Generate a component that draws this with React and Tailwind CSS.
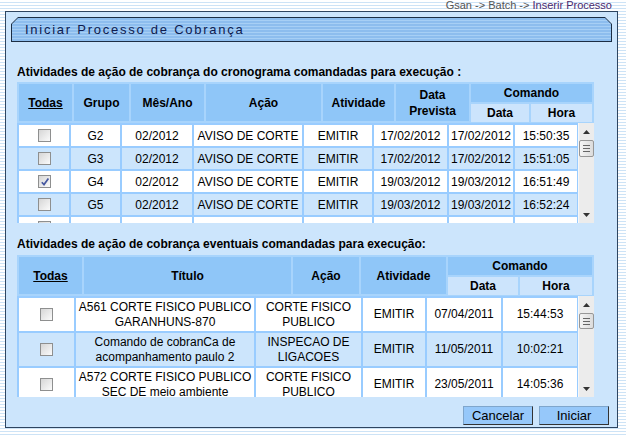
import React from "react";

// cronograma table rows
const cronograma = [
  { grupo: "G2", mes: "02/2012", acao: "AVISO DE CORTE", atv: "EMITIR", prev: "17/02/2012", data: "17/02/2012", hora: "15:50:35", checked: false },
  { grupo: "G3", mes: "02/2012", acao: "AVISO DE CORTE", atv: "EMITIR", prev: "17/02/2012", data: "17/02/2012", hora: "15:51:05", checked: false },
  { grupo: "G4", mes: "02/2012", acao: "AVISO DE CORTE", atv: "EMITIR", prev: "19/03/2012", data: "19/03/2012", hora: "16:51:49", checked: true },
  { grupo: "G5", mes: "02/2012", acao: "AVISO DE CORTE", atv: "EMITIR", prev: "19/03/2012", data: "19/03/2012", hora: "16:52:24", checked: false },
  { grupo: "", mes: "", acao: "", atv: "", prev: "", data: "", hora: "", checked: false },
];

const eventuais = [
  { titulo: "A561 CORTE FISICO PUBLICO GARANHUNS-870", acao: "CORTE FISICO PUBLICO", atv: "EMITIR", data: "07/04/2011", hora: "15:44:53" },
  { titulo: "Comando de cobranCa de acompanhamento paulo 2", acao: "INSPECAO DE LIGACOES", atv: "EMITIR", data: "11/05/2011", hora: "10:02:21" },
  { titulo: "A572 CORTE FISICO PUBLICO SEC DE meio ambiente", acao: "CORTE FISICO PUBLICO", atv: "EMITIR", data: "23/05/2011", hora: "14:05:36" },
];

const Check = ({ checked }) => (
  <span className="relative inline-block w-[13px] h-[13px] border border-[#8e8f8f] bg-linear-to-br from-[#d6d6d6] to-[#fbfbfb]">
    {checked && (
      <svg className="absolute left-[1px] top-[1px]" width="10" height="10" viewBox="0 0 10 10">
        <path d="M1.8 5.2 L4 7.6 L8.4 1.6" fill="none" stroke="#4658a0" strokeWidth="1.7" />
      </svg>
    )}
  </span>
);

const Arrow = ({ up }) => (
  <svg width="7" height="4" viewBox="0 0 7 4">
    <path d={up ? "M0 4 L3.5 0 L7 4 Z" : "M0 0 L7 0 L3.5 4 Z"} fill="#333" />
  </svg>
);

const Scrollbar = ({ thumbH }) => (
  <div className="w-[16px] flex flex-col bg-[#ececec] border-l border-[#f7f7f7]">
    <div className="h-[17px] flex items-center justify-center">
      <Arrow up />
    </div>
    <div className={`${thumbH} mx-[0px] rounded-[2px] border border-[#979797] bg-linear-to-r from-[#f4f4f4] to-[#dcdcdc] flex flex-col items-center justify-center gap-[2px]`}>
      <span className="block w-[7px] h-[1px] bg-[#666]" />
      <span className="block w-[7px] h-[1px] bg-[#666]" />
      <span className="block w-[7px] h-[1px] bg-[#666]" />
    </div>
    <div className="flex-1" />
    <div className="h-[17px] flex items-center justify-center">
      <Arrow />
    </div>
  </div>
);

const Cell = ({ w, bg, children, className = "" }) => (
  <div className={`${w} ${bg} flex items-center justify-center text-center shrink-0 ${className}`}>{children}</div>
);

const HeadCell = ({ w, children }) => (
  <div className={`${w} bg-[#8fc6f8] flex items-center justify-center text-center font-bold leading-[16px] shrink-0`}>{children}</div>
);

export default function App() {
  return (
    <div className="w-[626px] h-[435px] overflow-hidden bg-[repeating-linear-gradient(to_bottom,#ffffff_0px,#ffffff_2px,#cde3f6_2px,#cde3f6_3px)] font-['Liberation_Sans',Arial,sans-serif] text-black text-[12px]">
      {/* breadcrumb */}
      <div className="h-[11px] pr-[14px] text-right text-[11px] leading-[11px] text-[#555]">
        Gsan -&gt; Batch -&gt; <span className="text-[#4b2a6e]">Inserir Processo</span>
      </div>

      {/* main panel */}
      <div className="ml-[5px] w-[613px] h-[417px] border border-[#2e4560] bg-[#cce5fc] flex flex-col">
        {/* title bar */}
        <div className="mt-[5px] ml-[5px] w-[601px] h-[25px] bg-[#1c2e44] [clip-path:polygon(7px_0,calc(100%_-_7px)_0,100%_7px,100%_100%,0_100%,0_7px)]">
          <div className="m-[1px] h-[23px] flex items-center pl-[13px] bg-[repeating-linear-gradient(to_bottom,#8dbdee_0px,#8dbdee_2px,#a7cff5_2px,#a7cff5_3px)] [clip-path:polygon(6px_0,calc(100%_-_6px)_0,100%_6px,100%_100%,0_100%,0_6px)]">
            <span className="text-[13px] tracking-[1.75px] text-[#0d1b4f]">Iniciar Processo de Cobrança</span>
          </div>
        </div>

        {/* cronograma */}
        <div className="mt-[23px] ml-[11px] h-[14px] leading-[14px] font-bold">
          Atividades de ação de cobrança do cronograma comandadas para execução :
        </div>
        <div className="mt-[3px] ml-[11px] w-[577px] h-[41px] bg-[#a8d4fc] p-[2px] flex gap-[2px]">
          <HeadCell w="w-[53px]"><span className="underline">Todas</span></HeadCell>
          <HeadCell w="w-[55px]">Grupo</HeadCell>
          <HeadCell w="w-[73px]">Mês/Ano</HeadCell>
          <HeadCell w="w-[115px]">Ação</HeadCell>
          <HeadCell w="w-[71px]">Atividade</HeadCell>
          <HeadCell w="w-[73px]">Data<br />Prevista</HeadCell>
          <div className="w-[121px] flex flex-col gap-[2px] shrink-0">
            <div className="h-[19px] bg-[#8fc6f8] flex items-center justify-center font-bold">Comando</div>
            <div className="flex-1 flex gap-[2px]">
              <div className="w-[58px] bg-[#cce4fc] flex items-center justify-center font-bold">Data</div>
              <div className="flex-1 bg-[#cce4fc] flex items-center justify-center font-bold">Hora</div>
            </div>
          </div>
        </div>
        <div className="ml-[11px] w-[577px] h-[100px] bg-[#99ccff] flex overflow-hidden">
          <div className="w-[560px] pl-[2px] pt-[2px] flex flex-col gap-[2px]">
            {cronograma.map((r, i) => {
              const bg = i % 2 ? "bg-[#cce5fc]" : "bg-white";
              return (
                <div key={i} className="h-[21px] flex gap-[2px] shrink-0">
                  <Cell w="w-[50px]" bg={bg}><Check checked={r.checked} /></Cell>
                  <Cell w="w-[49px]" bg={bg}>{r.grupo}</Cell>
                  <Cell w="w-[70px]" bg={bg}>{r.mes}</Cell>
                  <Cell w="w-[108px]" bg={bg}>{r.acao}</Cell>
                  <Cell w="w-[68px]" bg={bg}>{r.atv}</Cell>
                  <Cell w="w-[73px]" bg={bg}>{r.prev}</Cell>
                  <Cell w="w-[64px]" bg={bg}>{r.data}</Cell>
                  <Cell w="w-[62px]" bg={bg}>{r.hora}</Cell>
                </div>
              );
            })}
          </div>
          <div className="w-[1px]" />
          <Scrollbar thumbH="h-[17px]" />
        </div>

        {/* eventuais */}
        <div className="mt-[14px] ml-[11px] h-[14px] leading-[14px] font-bold">
          Atividades de ação de cobrança eventuais comandadas para execução:
        </div>
        <div className="mt-[4px] ml-[11px] w-[577px] h-[41px] bg-[#a8d4fc] p-[2px] flex gap-[2px]">
          <HeadCell w="w-[63px]"><span className="underline">Todas</span></HeadCell>
          <HeadCell w="w-[207px]">Título</HeadCell>
          <HeadCell w="w-[66px]">Ação</HeadCell>
          <HeadCell w="w-[85px]">Atividade</HeadCell>
          <div className="w-[144px] flex flex-col gap-[2px] shrink-0">
            <div className="h-[19px] bg-[#8fc6f8] flex items-center justify-center font-bold">Comando</div>
            <div className="flex-1 flex gap-[2px]">
              <div className="w-[70px] bg-[#cce4fc] flex items-center justify-center font-bold">Data</div>
              <div className="flex-1 bg-[#cce4fc] flex items-center justify-center font-bold">Hora</div>
            </div>
          </div>
        </div>
        <div className="ml-[11px] w-[577px] h-[101px] bg-[#99ccff] flex overflow-hidden">
          <div className="w-[560px] pl-[2px] pt-[2px] flex flex-col gap-[2px]">
            {eventuais.map((r, i) => {
              const bg = i % 2 ? "bg-[#cce5fc]" : "bg-white";
              return (
                <div key={i} className="h-[33px] flex gap-[2px] shrink-0 leading-[15px]">
                  <Cell w="w-[55px]" bg={bg}><Check /></Cell>
                  <Cell w="w-[178px]" bg={bg}>{r.titulo}</Cell>
                  <Cell w="w-[105px]" bg={bg} className="px-[6px]">{r.acao}</Cell>
                  <Cell w="w-[62px]" bg={bg}>{r.atv}</Cell>
                  <Cell w="w-[74px]" bg={bg}>{r.data}</Cell>
                  <Cell w="w-[74px]" bg={bg}>{r.hora}</Cell>
                </div>
              );
            })}
          </div>
          <div className="w-[1px]" />
          <Scrollbar thumbH="h-[16px]" />
        </div>

        {/* buttons */}
        <div className="mt-[9px] pr-[8px] flex justify-end gap-[6px]">
          <button className="w-[70px] h-[19px] bg-[#96c8fa] border border-[#7fa6cc] border-r-[#333] border-b-[#333] text-[13px] leading-[17px]">
            Cancelar
          </button>
          <button className="w-[70px] h-[19px] bg-[#96c8fa] border border-[#7fa6cc] border-r-[#333] border-b-[#333] text-[13px] leading-[17px]">
            Iniciar
          </button>
        </div>
      </div>
    </div>
  );
}
